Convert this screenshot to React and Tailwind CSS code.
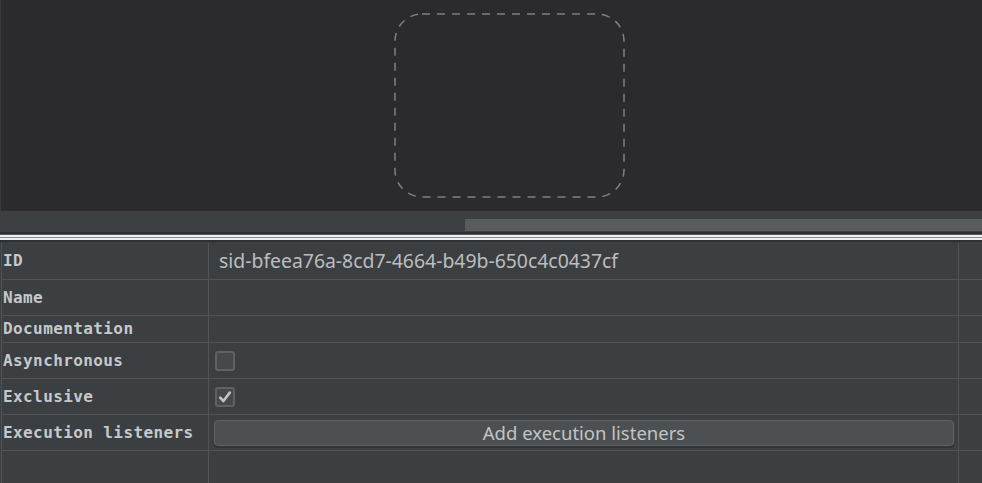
import React from 'react';

const labelFont = { fontFamily: '"DejaVu Sans Mono", "Liberation Mono", monospace' };
const valueFont = { fontFamily: '"Noto Sans", "Open Sans", sans-serif' };

const Checkbox = ({ checked }) => (
  <div className="w-[20px] h-[20px] rounded-[3px] border-2 border-[#5f6265] bg-[#45494c] flex items-center justify-center">
    {checked && (
      <svg width="16" height="16" viewBox="0 0 16 16">
        <path d="M3.2 8.6 L6.4 12 L12.8 3.6" fill="none" stroke="#c2c4c6" strokeWidth="2.6" strokeLinecap="round" strokeLinejoin="round" />
      </svg>
    )}
  </div>
);

const Row = ({ label, h, children }) => (
  <div className={`flex shrink-0 border-b border-[#515456] ${h}`}>
    <div className="w-[207px] shrink-0 flex items-center pl-[1px] text-[16px] tracking-[0.4px] font-bold text-[#c6c9cc] border-r border-[#515456]" style={labelFont}>
      {label}
    </div>
    <div className="w-[750px] shrink-0 flex items-center border-r border-[#515456]">
      {children}
    </div>
    <div className="flex-1" />
  </div>
);

export default function App() {
  return (
    <div className="w-[982px] h-[483px] overflow-hidden bg-[#3c3f41] flex flex-col">
      {/* diagram canvas */}
      <div className="h-[211px] shrink-0 bg-[#2b2b2d] border-l border-[#36393b] pl-[393px] pt-[13px]">
        <svg width="232" height="186" viewBox="0 0 232 186">
          <rect x="1" y="1" width="229" height="183" rx="27" fill="none" stroke="#808081" strokeWidth="1.5" strokeDasharray="8 7" />
        </svg>
      </div>

      {/* horizontal scrollbar */}
      <div className="h-[21px] shrink-0 bg-[#3d4043] flex justify-end pt-[8px]">
        <div className="w-[517px] h-[12px] bg-[#5a5b5d]" />
      </div>

      {/* splitter */}
      <div className="h-[2px] shrink-0 bg-[#2e3032]" />
      <div className="h-[1px] shrink-0 bg-[#56595b]" />
      <div className="h-[2px] shrink-0 bg-[#f0f0f0]" />
      <div className="h-[1px] shrink-0 bg-[#7f8c9a]" />
      <div className="h-[2px] shrink-0 bg-[#eeeeee]" />
      <div className="h-[2px] shrink-0 bg-[#2e3032]" />
      <div className="h-[1px] shrink-0 bg-[#3c3f41]" />

      {/* properties table */}
      <div className="flex-1 min-h-0 flex flex-col ml-[1px] border-l border-[#515456]">
        <Row label="ID" h="h-[37px]">
          <span className="pl-[10px] text-[19.4px] text-[#bbbdbf]" style={valueFont}>sid-bfeea76a-8cd7-4664-b49b-650c4c0437cf</span>
        </Row>
        <Row label="Name" h="h-[36px]" />
        <Row label="Documentation" h="h-[27px]" />
        <Row label="Asynchronous" h="h-[36px]">
          <div className="pl-[6px]"><Checkbox /></div>
        </Row>
        <Row label="Exclusive" h="h-[36px]">
          <div className="pl-[6px]"><Checkbox checked /></div>
        </Row>
        <Row label="Execution listeners" h="h-[36px]">
          <div className="flex-1 pl-[5px] pr-[4px]">
            <div className="h-[26px] rounded-[4px] border border-[#5f6264] bg-[#4c5052] shadow-[0_2px_0_#333537] flex items-center justify-center text-[18.5px] text-[#c2c4c6]" style={valueFont}>
              Add execution listeners
            </div>
          </div>
        </Row>
        <div className="flex flex-1">
          <div className="w-[207px] shrink-0 border-r border-[#515456]" />
          <div className="w-[750px] shrink-0 border-r border-[#515456]" />
        </div>
      </div>
    </div>
  );
}
